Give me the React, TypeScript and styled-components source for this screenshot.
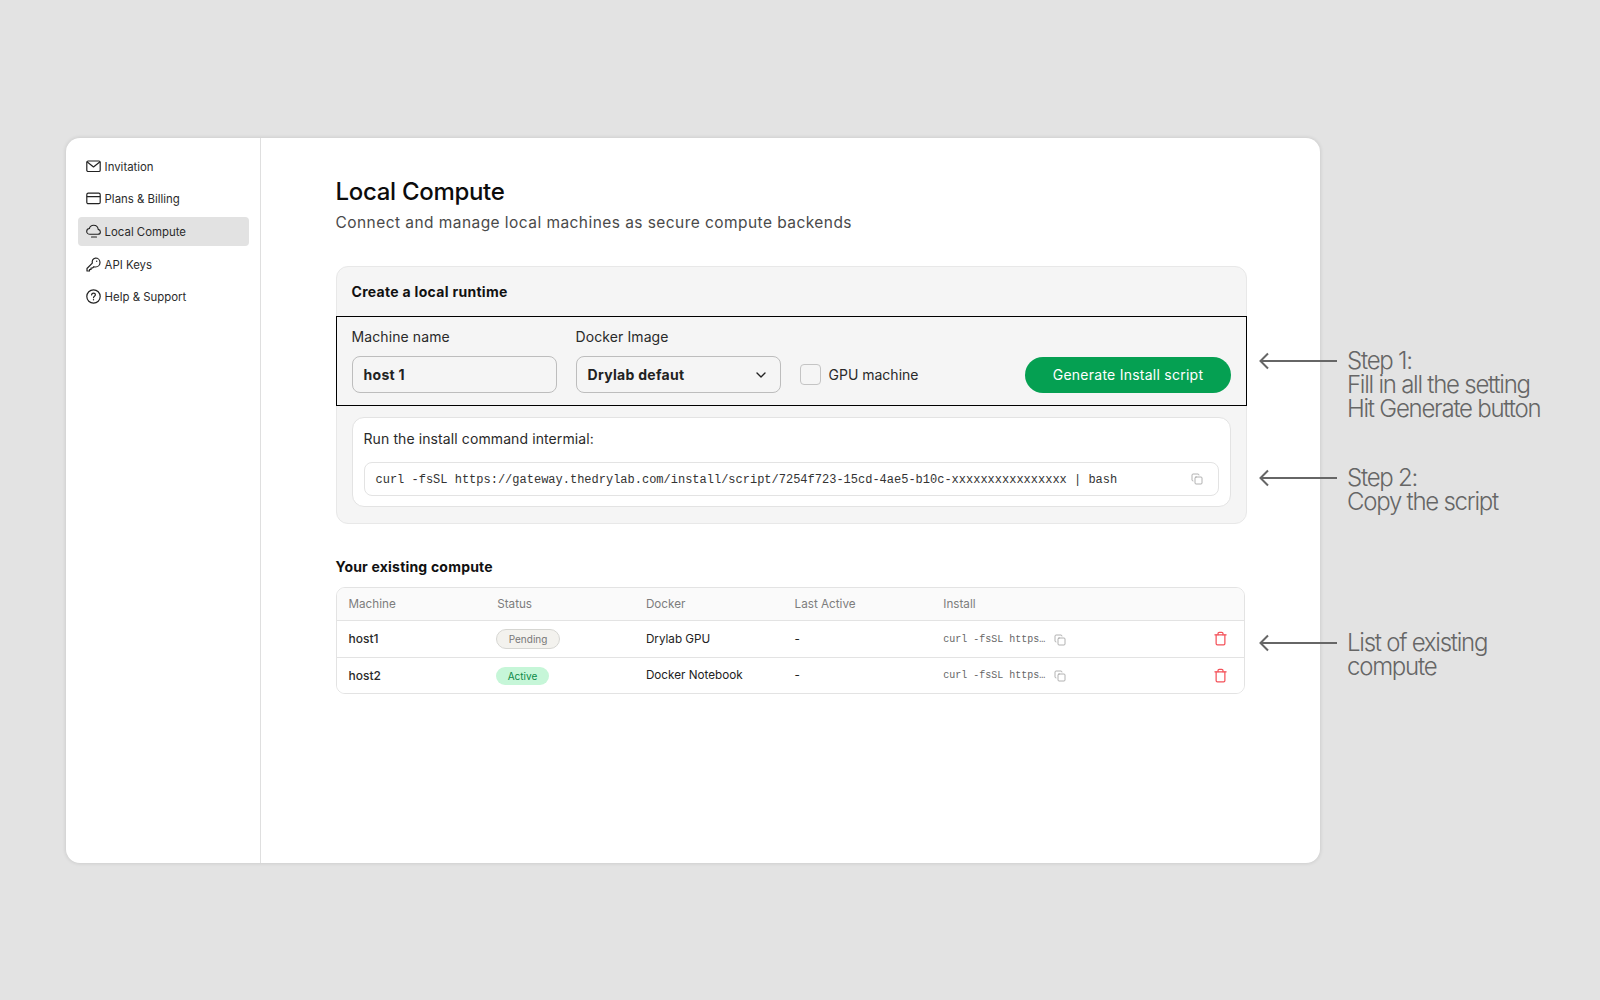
import React from "react";
import styled, { createGlobalStyle } from "styled-components";
import { ChevronDown, Copy, Trash } from "lucide-react";

const Global = createGlobalStyle`
  html, body { margin: 0; padding: 0; background: #e3e3e3; }
  body { font-family: Inter, "Liberation Sans", sans-serif; color: #111; }
  * { box-sizing: border-box; }
`;

const Page = styled.div`
  position: relative;
  width: 1600px;
  height: 1000px;
  padding: 138px 0 0 66px;
  overflow: hidden;
`;

const Card = styled.div`
  width: 1254px;
  height: 725px;
  background: #fff;
  border-radius: 14px;
  box-shadow: 0 0 4px rgba(0, 0, 0, 0.14);
  display: flex;
  overflow: hidden;
`;

const Sidebar = styled.nav`
  width: 195px;
  flex: none;
  border-right: 1px solid #dfdfdf;
  padding: 14px 11px 0 12px;
  display: flex;
  flex-direction: column;
  gap: 3.7px;
`;

const NavItem = styled.div<{ $active?: boolean }>`
  height: 29px;
  border-radius: 4px;
  display: flex;
  align-items: center;
  gap: 3.6px;
  padding-left: 8px;
  font-size: 11.4px;
  color: #2b2b2b;
  background: ${(p) => (p.$active ? "#e2e2e2" : "transparent")};
  svg { flex: none; margin-top: -1px; }
`;

const Main = styled.main`
  flex: 1;
  padding: 39px 0 0 74.5px;
  min-width: 0;
`;

const Title = styled.h1`
  margin: 0;
  font-size: 24px;
  line-height: 29px;
  font-weight: 500;
  letter-spacing: -0.3px;
  color: #0c0c0c;
`;

const Subtitle = styled.p`
  margin: 7px 0 0;
  font-size: 15.5px;
  line-height: 20px;
  color: #4a4a4a;
  letter-spacing: 0.44px;
`;

const Panel = styled.section`
  width: 911.5px;
  height: 258px;
  margin-top: 33px;
  background: #f5f5f5;
  border: 1px solid #e8e8e8;
  border-radius: 12px;
`;

const PanelTitle = styled.h2`
  margin: 0;
  height: 49px;
  padding: 16px 0 0 15px;
  font-size: 14px;
  line-height: 17px;
  font-weight: 700;
  letter-spacing: 0.3px;
  color: #111;
`;

const FormRow = styled.div`
  margin: 0 -1px;
  height: 90px;
  border: 1px solid #000;
  padding: 11px 15px 0 15px;
  display: flex;
  align-items: flex-start;
`;

const Field = styled.div`
  width: 205px;
  margin-right: 19px;
`;

const FieldLabel = styled.div`
  font-size: 14px;
  line-height: 18px;
  letter-spacing: 0.1px;
  color: #2a2a2a;
  margin-bottom: 10px;
`;

const TextBox = styled.div`
  height: 37px;
  border: 1px solid #bdbdbd;
  border-radius: 8px;
  padding: 0 11px;
  display: flex;
  align-items: center;
  justify-content: space-between;
  font-size: 14px;
  font-weight: 700;
  letter-spacing: 0.3px;
  color: #222;
`;

const CheckRow = styled.label`
  margin-top: 36px;
  display: flex;
  align-items: center;
  gap: 8px;
  font-size: 14px;
  color: #2a2a2a;
  line-height: 20px;
`;

const CheckBox = styled.span`
  width: 21px;
  height: 21px;
  border: 1px solid #c4c4c4;
  border-radius: 4px;
  background: #f5f5f5;
`;

const GenerateButton = styled.button`
  margin: 29px 0 0 auto;
  width: 206px;
  height: 36px;
  padding: 0 0 2px;
  border: 0;
  border-radius: 18px;
  background: #05a052;
  color: #fff;
  font-family: inherit;
  font-size: 14px;
  letter-spacing: 0.25px;
`;

const ScriptCard = styled.div`
  margin: 11px 15px 0;
  height: 90px;
  background: #fff;
  border: 1px solid #e3e3e3;
  border-radius: 12px;
  padding: 12px 11px 0;
`;

const ScriptLabel = styled.div`
  font-size: 14px;
  line-height: 18px;
  letter-spacing: 0.1px;
  color: #2a2a2a;
`;

const CommandBox = styled.div`
  margin-top: 14px;
  height: 34px;
  border: 1px solid #e3e3e3;
  border-radius: 8px;
  padding: 1px 15px 0 11px;
  display: flex;
  align-items: center;
  justify-content: space-between;
  font-family: "Liberation Mono", monospace;
  font-size: 12px;
  color: #333;
  svg { color: #999; margin-top: -1px; }
`;

const SectionTitle = styled.h3`
  margin: 34px 0 0;
  font-size: 14px;
  line-height: 18px;
  font-weight: 700;
  letter-spacing: 0.2px;
  color: #111;
`;

const Table = styled.div`
  width: 909.5px;
  margin-top: 11px;
  border: 1px solid #e3e3e3;
  border-radius: 9px;
  overflow: hidden;
`;

const Row = styled.div<{ $head?: boolean }>`
  display: grid;
  grid-template-columns: 148.7px 148.7px 148.7px 148.7px 1fr 38px;
  align-items: center;
  height: ${(p) => (p.$head ? "32px" : "36.5px")};
  padding-left: 12px;
  background: ${(p) => (p.$head ? "#fafafa" : "#fff")};
  color: ${(p) => (p.$head ? "#7d7d7d" : "#222")};
  font-size: 11.7px;
  & + & { border-top: 1px solid #e3e3e3; }
`;

const HostName = styled.span`
  font-weight: 500;
  font-size: 12px;
  color: #2a2a2a;
`;

const Badge = styled.span<{ $tone: "pending" | "active" }>`
  justify-self: start;
  height: ${(p) => (p.$tone === "pending" ? "20px" : "18px")};
  padding: 0 11.5px;
  display: inline-flex;
  align-items: center;
  border-radius: 10px;
  font-size: 10px;
  margin: ${(p) => (p.$tone === "active" ? "1px" : "0")} 0 0 -1px;
  background: ${(p) => (p.$tone === "pending" ? "#f3f2ee" : "#c6f6d8")};
  border: ${(p) => (p.$tone === "pending" ? "1px solid #d6d6d2" : "0")};
  color: ${(p) => (p.$tone === "pending" ? "#777" : "#0a8a47")};
`;

const InstallCell = styled.span`
  display: flex;
  align-items: center;
  gap: 9px;
  font-family: "Liberation Mono", monospace;
  font-size: 10px;
  color: #666;
  padding-top: 1px;
  svg { color: #999; margin-top: 1px; }
`;

const DeleteIcon = styled.span`
  display: flex;
  margin-left: 6.5px;
  color: #f4525a;
`;

const Callout = styled.div<{ $top: number }>`
  position: absolute;
  left: 1259px;
  top: ${(p) => p.$top}px;
  display: flex;
  align-items: flex-start;
  gap: 10px;
`;

const CalloutText = styled.div`
  font-size: 24px;
  font-weight: 300;
  line-height: 24px;
  letter-spacing: -1.25px;
  color: #666;
  white-space: pre-line;
`;

const Arrow = () => (
  <svg width="78" height="24" viewBox="0 0 78 24" fill="none" stroke="#666" strokeWidth="2">
    <path d="M1.500 12h76.500M9 4.500L1.500 12 9 19.500" />
  </svg>
);

const MailIcon = () => (
  <svg width="15" height="15" viewBox="0 0 15 15" fill="none" stroke="#222" strokeWidth="1.2" strokeLinejoin="round">
    <rect x=".8" y="2" width="13.400" height="10.500" rx="1.300" />
    <path d="M1 2.800L7.500 8l6.500-5.200" />
  </svg>
);

const CardIcon = () => (
  <svg width="15" height="15" viewBox="0 0 15 15" fill="none" stroke="#222" strokeWidth="1.2">
    <rect x=".8" y="2.200" width="13.400" height="10.500" rx="1.500" />
    <path d="M.8 5.700h13.400" />
  </svg>
);

const CloudIcon = () => (
  <svg width="15" height="15" viewBox="0 0 15 15" fill="none" stroke="#222" strokeWidth="1.100" strokeLinecap="round" strokeLinejoin="round">
    <path d="M4 10.300C2 10.300.7 9 .7 7.400.7 5.900 1.900 4.700 3.400 4.500 3.900 2.600 5.600 1.200 7.600 1.200c2.400 0 4.400 1.800 4.600 4.200 1.300.3 2.200 1.400 2.200 2.600 0 1.300-1.200 2.300-2.700 2.300H4z" />
    <path d="M5.500 13h5" />
  </svg>
);

const KeyIcon = () => (
  <svg width="15" height="15" viewBox="0 0 15 15" fill="none" stroke="#222" strokeWidth="1.200" strokeLinejoin="round">
    <path d="M9.500 1c2.500 0 4.500 2 4.500 4.500S12 10 9.500 10c-.6 0-1.100-.1-1.600-.3L6.500 11H5v1.500H3.500V14H1v-2.500l5.300-5.400A4.500 4.500 0 0 1 9.500 1z" />
    <circle cx="10.700" cy="4.300" r=".7" fill="#222" stroke="none" />
  </svg>
);

const HelpIcon = () => (
  <svg width="15" height="15" viewBox="0 0 15 15" fill="none" stroke="#222" strokeWidth="1.200" strokeLinecap="round">
    <circle cx="7.500" cy="7.500" r="6.700" />
    <path d="M5.600 5.900c.1-1 .9-1.700 1.900-1.700 1.100 0 1.900.7 1.900 1.600 0 1.500-1.900 1.500-1.900 2.900" />
    <circle cx="7.500" cy="10.700" r=".7" fill="#222" stroke="none" />
  </svg>
);

const nav = [
  { label: "Invitation", icon: <MailIcon /> },
  { label: "Plans & Billing", icon: <CardIcon /> },
  { label: "Local Compute", icon: <CloudIcon />, active: true },
  { label: "API Keys", icon: <KeyIcon /> },
  { label: "Help & Support", icon: <HelpIcon /> },
];

const rows = [
  { host: "host1", tone: "pending" as const, status: "Pending", docker: "Drylab GPU" },
  { host: "host2", tone: "active" as const, status: "Active", docker: "Docker Notebook" },
];

export default function App() {
  return (
    <Page>
      <Global />
      <Card>
        <Sidebar>
          {nav.map((n) => (
            <NavItem key={n.label} $active={n.active}>
              {n.icon}
              {n.label}
            </NavItem>
          ))}
        </Sidebar>
        <Main>
          <Title>Local Compute</Title>
          <Subtitle>Connect and manage local machines as secure compute backends</Subtitle>
          <Panel>
            <PanelTitle>Create a local runtime</PanelTitle>
            <FormRow>
              <Field>
                <FieldLabel>Machine name</FieldLabel>
                <TextBox>host 1</TextBox>
              </Field>
              <Field>
                <FieldLabel>Docker Image</FieldLabel>
                <TextBox>
                  Drylab defaut
                  <ChevronDown size={16} strokeWidth={2} color="#222" />
                </TextBox>
              </Field>
              <CheckRow>
                <CheckBox />
                GPU machine
              </CheckRow>
              <GenerateButton>Generate Install script</GenerateButton>
            </FormRow>
            <ScriptCard>
              <ScriptLabel>Run the install command intermial:</ScriptLabel>
              <CommandBox>
                curl -fsSL https://gateway.thedrylab.com/install/script/7254f723-15cd-4ae5-b10c-xxxxxxxxxxxxxxxx | bash
                <Copy size={12} strokeWidth={1.5} />
              </CommandBox>
            </ScriptCard>
          </Panel>
          <SectionTitle>Your existing compute</SectionTitle>
          <Table>
            <Row $head>
              <span>Machine</span>
              <span>Status</span>
              <span>Docker</span>
              <span>Last Active</span>
              <span>Install</span>
              <span />
            </Row>
            {rows.map((r) => (
              <Row key={r.host}>
                <HostName>{r.host}</HostName>
                <Badge $tone={r.tone}>{r.status}</Badge>
                <span>{r.docker}</span>
                <span>-</span>
                <InstallCell>
                  curl -fsSL https…
                  <Copy size={12} strokeWidth={1.5} />
                </InstallCell>
                <DeleteIcon>
                  <Trash size={15} strokeWidth={2} />
                </DeleteIcon>
              </Row>
            ))}
          </Table>
        </Main>
      </Card>
      <Callout $top={349}>
        <Arrow />
        <CalloutText>{"Step 1:\nFill in all the setting\nHit Generate button"}</CalloutText>
      </Callout>
      <Callout $top={466}>
        <Arrow />
        <CalloutText>{"Step 2:\nCopy the script"}</CalloutText>
      </Callout>
      <Callout $top={631}>
        <Arrow />
        <CalloutText>{"List of existing\ncompute"}</CalloutText>
      </Callout>
    </Page>
  );
}
